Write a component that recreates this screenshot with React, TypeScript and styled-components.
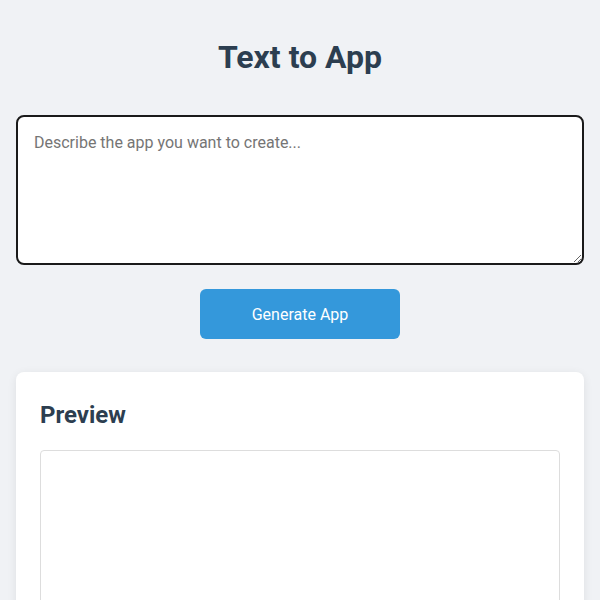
import styled, { createGlobalStyle } from 'styled-components'

const GlobalStyle = createGlobalStyle`
  html, body {
    margin: 0;
    padding: 0;
    background: #f0f2f5;
    font-family: Roboto, "Liberation Sans", sans-serif;
  }
  * {
    box-sizing: border-box;
  }
`

const Page = styled.div`
  max-width: 800px;
  margin: 0 auto;
  padding: 16px;
  display: flex;
  flex-direction: column;
`

const Title = styled.h1`
  margin: 22px 0 39px;
  text-align: center;
  font-size: 32px;
  font-weight: 700;
  color: #2c3e50;
`

const PromptInput = styled.textarea`
  width: 100%;
  height: 150px;
  padding: 16px;
  border: 2px solid #1a1a1a;
  border-radius: 8px;
  background: #fff;
  font-family: Roboto, "Liberation Sans", sans-serif;
  font-size: 16px;
  color: #333;
  resize: vertical;
  outline: none;

  &::placeholder {
    color: #757575;
  }
`

const GenerateButton = styled.button`
  align-self: center;
  width: 200px;
  height: 50px;
  margin-top: 24px;
  border: none;
  border-radius: 6px;
  background: #3498db;
  color: #fff;
  font-family: Roboto, "Liberation Sans", sans-serif;
  font-size: 16px;
  cursor: pointer;
`

const PreviewCard = styled.section`
  margin-top: 33px;
  padding: 24px;
  background: #fff;
  border-radius: 8px;
  box-shadow: 0 2px 10px rgba(0, 0, 0, 0.08);
`

const PreviewTitle = styled.h2`
  margin: 5px 0 21px;
  font-size: 24px;
  font-weight: 700;
  color: #2c3e50;
`

const PreviewFrame = styled.div`
  height: 400px;
  border: 1px solid #ddd;
  border-radius: 4px;
  background: #fff;
`

export default function App() {
  return (
    <>
      <GlobalStyle />
      <Page>
        <Title>Text to App</Title>
        <PromptInput placeholder="Describe the app you want to create..." />
        <GenerateButton>Generate App</GenerateButton>
        <PreviewCard>
          <PreviewTitle>Preview</PreviewTitle>
          <PreviewFrame />
        </PreviewCard>
      </Page>
    </>
  )
}
